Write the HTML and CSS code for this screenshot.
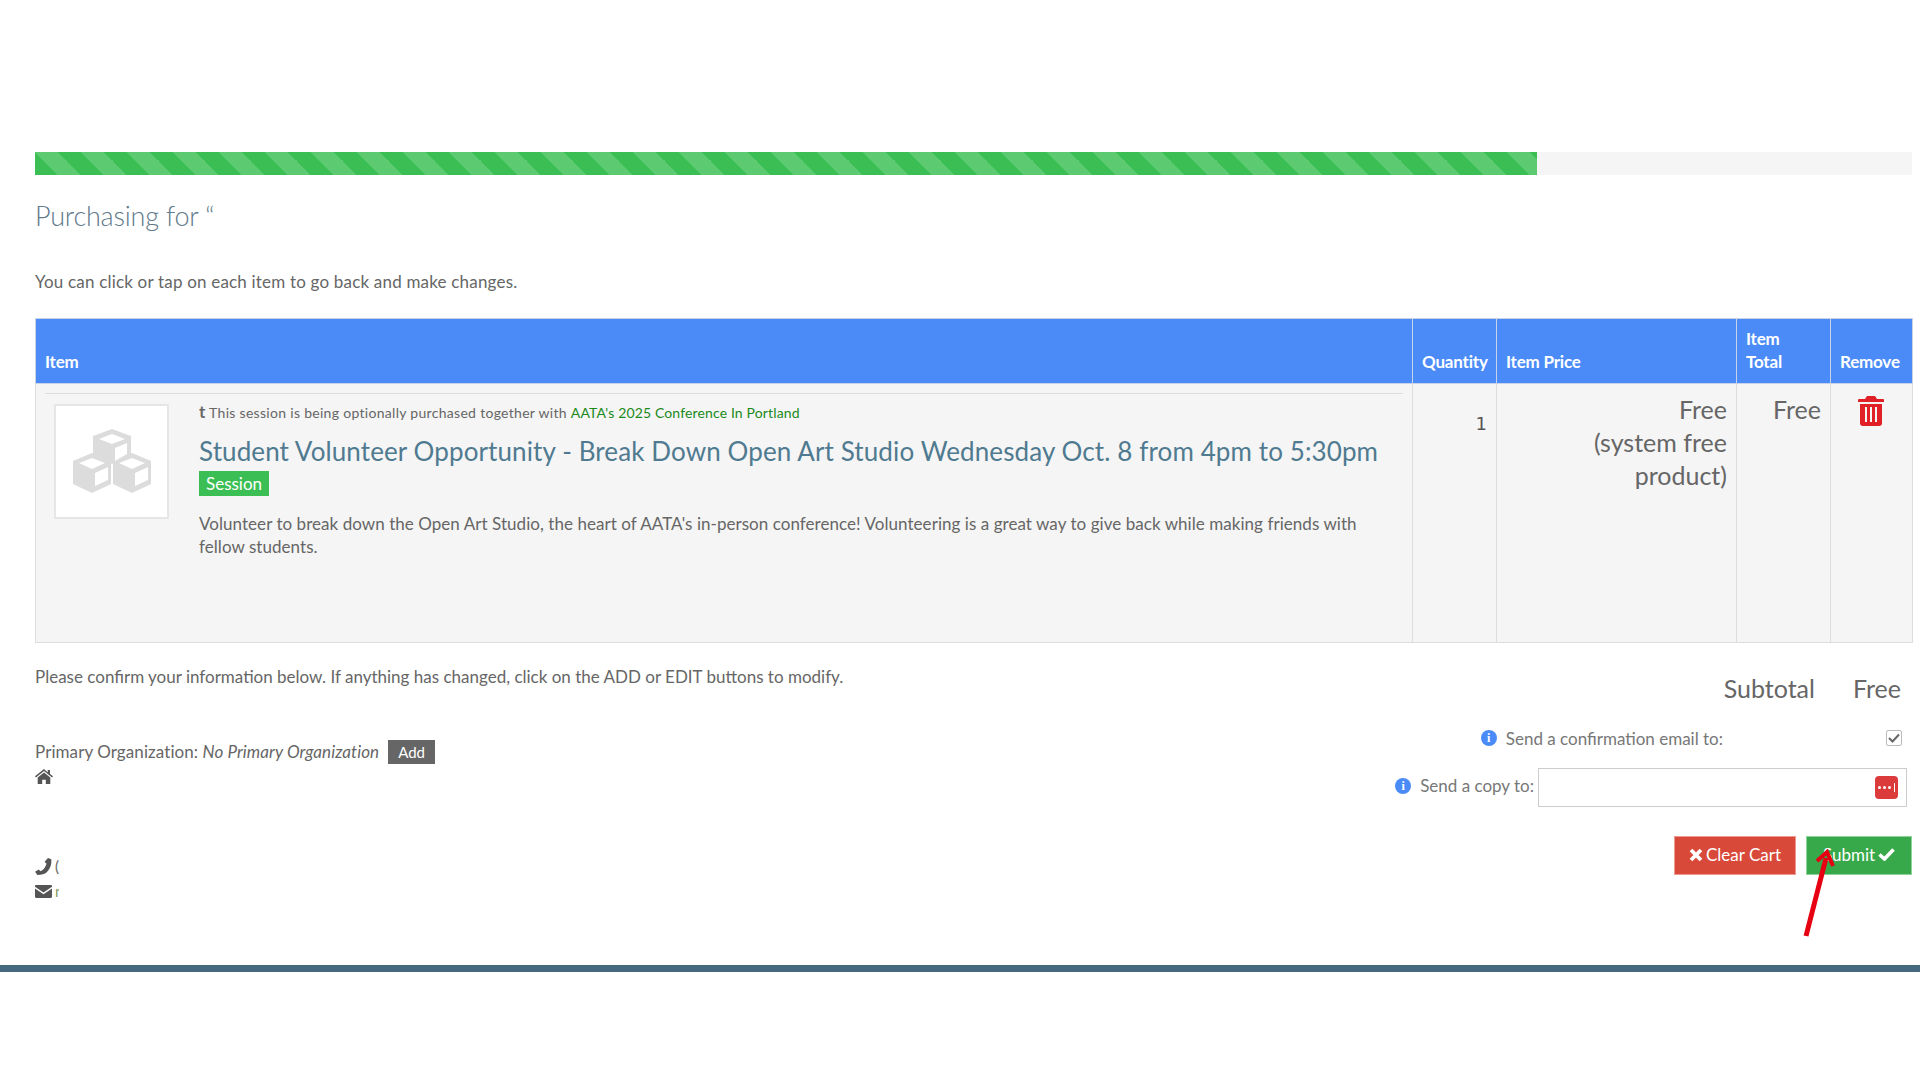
FILE: index.html
```html
<!DOCTYPE html>
<html lang="en">
<head>
<meta charset="utf-8">
<title>Purchasing</title>
<link rel="stylesheet" href="styles.css">
</head>
<body>
<main class="page">
  <div class="progress"><div class="progress-fill"></div></div>
  <h2 class="purchasing">Purchasing for “</h2>
  <p class="hint">You can click or tap on each item to go back and make changes.</p>
  <table class="cart">
    <colgroup>
      <col class="c-item"><col class="c-qty"><col class="c-price"><col class="c-total"><col class="c-remove">
    </colgroup>
    <thead>
      <tr><th>Item</th><th>Quantity</th><th>Item Price</th><th>Item<br>Total</th><th>Remove</th></tr>
    </thead>
    <tbody>
      <tr>
        <td class="item-cell">
          <div class="item-rule"></div>
          <div class="item">
            <div class="thumb">
              <svg width="80" height="66" viewBox="0 0 80 66">
                <g fill="#dcdcdc">
                  <path d="M40 0l19 7v20l-19 8-19-8V7z"/>
                  <path d="M20 24l19 8v23l-19 9L1 55V32z"/>
                  <path d="M60 24l19 8v23l-19 9-19-9V32z"/>
                </g>
                <g fill="#fff">
                  <path d="M40 5l13 5-13 5-13-5z"/>
                  <path d="M43 19l12-5v11l-12 7z"/>
                  <path d="M20 29l13 5-13 6-13-6z"/>
                  <path d="M23 44l13-6v13l-13 6z"/>
                  <path d="M60 29l13 5-13 6-13-6z"/>
                  <path d="M63 44l13-6v13l-13 6z"/>
                </g>
              </svg>
            </div>
            <div class="item-body">
              <p class="note"><span class="dagger">t</span> This session is being optionally purchased together with <a class="note-link">AATA's 2025 Conference In Portland</a></p>
              <h3 class="item-title">Student Volunteer Opportunity - Break Down Open Art Studio Wednesday Oct. 8 from 4pm to 5:30pm</h3>
              <span class="badge">Session</span>
              <p class="desc">Volunteer to break down the Open Art Studio, the heart of AATA's in-person conference! Volunteering is a great way to give back while making friends with fellow students.</p>
            </div>
          </div>
        </td>
        <td class="qty">1</td>
        <td class="money">Free<br>(system free product)</td>
        <td class="money">Free</td>
        <td class="remove">
          <svg width="26" height="30" viewBox="0 0 26 30" fill="#e01f26">
            <path d="M9 0h8l2 3h6a1 1 0 0 1 1 1v2H0V4a1 1 0 0 1 1-1h6z"/>
            <path fill-rule="evenodd" d="M2 8h22v19a3 3 0 0 1-3 3H5a3 3 0 0 1-3-3zM7 11v15h2V11zm5 0v15h2V11zm5 0v15h2V11z"/>
          </svg>
        </td>
      </tr>
    </tbody>
  </table>

  <div class="below">
    <section class="info">
      <p class="confirm">Please confirm your information below. If anything has changed, click on the ADD or EDIT buttons to modify.</p>
      <div class="org"><span>Primary Organization: <em>No Primary Organization</em></span><span class="add">Add</span></div>
      <div class="contact home">
        <svg width="18" height="15" viewBox="0 0 18 15" fill="#555"><path d="M9 0L0 7.300l.9 1.100L9 1.900l8.100 6.500.9-1.100-3-2.400V1h-2.300v2.400z"/><path d="M9 3.400L2.700 8.500V15h4.500v-4.200h3.600V15h4.500V8.500z"/></svg>
      </div>
      <div class="contact phone">
        <svg width="17" height="17" viewBox="0 0 17 17" fill="#555"><path d="M13 0l3.300 1.300c.5 5-1 9.500-4.300 12.700-2.500 2.300-5.500 3-9.500 3L0 13.800l3.700-2.300 1.800 1.700c3-1.500 5.200-4.200 6-7.500L9.600 3.800z"/></svg><span class="clip">(</span>
      </div>
      <div class="contact mail">
        <svg width="17" height="13" viewBox="0 0 17 13" fill="#555"><path d="M1.200 0h14.600c.7 0 1.200.5 1.200 1.200v.6L8.500 7.500 0 1.800v-.6C0 .5.500 0 1.200 0z"/><path d="M0 3.600l8.500 5.600L17 3.600v8.200c0 .7-.5 1.200-1.200 1.200H1.200C.5 13 0 12.500 0 11.800z"/></svg><span class="clip clip-green">n</span>
      </div>
    </section>
    <section class="summary">
      <div class="subtotal"><span>Subtotal</span><span>Free</span></div>
      <div class="send-row">
        <span class="i-dot">i</span><span class="send-label">Send a confirmation email to:</span>
        <span class="check"><svg width="12" height="10" viewBox="0 0 12 10" fill="none" stroke="#666" stroke-width="2"><path d="M1 5l3.500 3.500L11 1.500"/></svg></span>
      </div>
      <div class="copy-row">
        <span class="i-dot i-dot-copy">i</span><span class="copy-label">Send a copy to:</span>
        <div class="copy-input"><span class="pm"><i></i><i></i><i></i><b></b></span></div>
      </div>
      <div class="actions">
        <button class="btn btn-red"><svg width="14" height="14" viewBox="0 0 14 14" stroke="#fff" stroke-width="3.800" fill="none"><path d="M2 2l10 10m0-10L2 12"/></svg>Clear Cart</button>
        <button class="btn btn-green">Submit<svg width="17" height="13" viewBox="0 0 17 13" stroke="#fff" stroke-width="3.600" fill="none"><path d="M1.500 6.500l5 4.500 9-9.500"/></svg></button>
        <svg class="arrow" width="36" height="96" viewBox="0 0 36 96"><path d="M4 90L24 12" stroke="#e60012" stroke-width="5" fill="none"/><path d="M15 15l10-9 6 14" stroke="#e60012" stroke-width="4" fill="none"/></svg>
      </div>
    </section>
  </div>
</main>
<div class="footer-bar"></div>
</body>
</html>
```
FILE: styles.css
```css
* { box-sizing: border-box; }
html, body { margin: 0; padding: 0; }
body {
  background: #fff;
  color: #666;
  font-family: "Lato", "Liberation Sans", sans-serif;
  font-size: 17px;
  height: 1080px;
}
.page { padding: 152px 8px 0 35px; }
.progress { height: 23px; background: #f5f5f5; }
.progress-fill {
  height: 100%;
  width: 1502px;
  background-color: #3bbf55;
  background-image: linear-gradient(45deg, #5bca70 25%, transparent 25%, transparent 50%, #5bca70 50%, #5bca70 75%, transparent 75%);
  background-size: 46px 46px;
}
.purchasing {
  margin: 25px 0 0;
  font-size: 27px;
  font-weight: 300;
  line-height: 32px;
  color: #5f7a8a;
  letter-spacing: -0.2px;
}
.hint { margin: 38px 0 0; line-height: 24px; letter-spacing: 0.19px; }
.cart {
  margin-top: 24px;
  width: 1877px;
  table-layout: fixed;
  border-collapse: collapse;
  background: #f5f5f5;
}
.c-item { width: 1377px; }
.c-qty { width: 84px; }
.c-price { width: 240px; }
.c-total { width: 94px; }
.c-remove { width: 82px; }
.cart th {
  height: 65px;
  background: #4b8bf8;
  color: #fff;
  font-size: 17px;
  font-weight: 700;
  text-align: left;
  vertical-align: bottom;
  padding: 0 9px 10px;
  line-height: 23px;
  letter-spacing: -0.2px;
  border: 1px solid #c8d4e6;
  white-space: nowrap;
}
.cart td { height: 259px; border: 1px solid #ddd; vertical-align: top; }
.item-cell { padding: 9px 9px 0; }
.item-rule { border-top: 1px solid #ddd; }
.item { display: flex; gap: 30px; padding: 10px 0 0 9px; }
.thumb {
  flex: none;
  width: 115px;
  height: 115px;
  background: #fff;
  border: 2px solid #e6e6e6;
  display: flex;
  align-items: center;
  justify-content: center;
}
.item-body { flex: 1; min-width: 0; }
.note { margin: -2px 0 0; font-size: 14px; line-height: 20px; letter-spacing: 0.3px; }
.dagger { font-weight: 700; font-size: 17px; }
.note-link { color: #1a8a1a; letter-spacing: 0.14px; }
.item-title {
  margin: 11px 0 0;
  font-size: 26px;
  font-weight: 400;
  line-height: 34px;
  color: #4f7a90;
  letter-spacing: 0.11px;
  white-space: nowrap;
}
.badge {
  display: inline-block;
  margin-top: 3px;
  background: #3bbf55;
  color: #fff;
  font-size: 17px;
  line-height: 25px;
  height: 25px;
  padding: 0 7px;
}
.desc { margin: 16px 0 0; line-height: 23px; letter-spacing: 0.05px; }
.qty { text-align: right; padding: 29px 9px 0; font-size: 18px; color: #555; font-family: "DejaVu Sans", sans-serif; }
.money { text-align: right; padding: 9px 9px 0; font-size: 25px; line-height: 33px; color: #666; }
.remove { text-align: center; padding-top: 12px; padding-right: 2px; }
.below { display: flex; justify-content: space-between; }
.info { padding-top: 22px; }
.confirm { margin: 0; line-height: 24px; }
.org { margin-top: 51px; display: flex; align-items: center; gap: 9px; line-height: 24px; letter-spacing: 0.08px; }
.add {
  background: #666;
  color: #fff;
  font-size: 15px;
  height: 24px;
  line-height: 24px;
  padding: 0 10px;
  letter-spacing: 0;
}
.contact { display: flex; align-items: center; gap: 3px; height: 25px; }
.home { margin-top: 0; }
.phone { margin-top: 65px; }
.clip { display: inline-block; width: 4px; overflow: hidden; font-size: 15px; line-height: 17px; }
.clip-green { color: #8a9a60; }
.summary { width: 560px; display: flex; flex-direction: column; align-items: flex-end; padding-top: 29px; }
.subtotal { display: flex; gap: 38px; padding-right: 11px; font-size: 25px; line-height: 32px; color: #666; }
.send-row { display: flex; align-items: center; margin-top: 22px; height: 24px; padding-right: 10px; color: #777; }
.i-dot {
  flex: none;
  width: 16px;
  height: 16px;
  border-radius: 50%;
  background: #4b8bf8;
  color: #fff;
  font: 700 12px/16px "Liberation Serif", serif;
  text-align: center;
  margin-right: 9px;
}
.i-dot-copy { margin-bottom: 4px; }
.send-label { margin-right: 163px; }
.check {
  width: 16px;
  height: 16px;
  border: 1px solid #bbb;
  border-radius: 2px;
  display: flex;
  align-items: center;
  justify-content: center;
}
.copy-row { display: flex; align-items: center; margin-top: 18px; padding-right: 5px; color: #777; }
.copy-label { margin-right: 4px; margin-bottom: 4px; }
.copy-input {
  width: 369px;
  height: 39px;
  border: 1px solid #ccc;
  display: flex;
  align-items: center;
  justify-content: flex-end;
  padding-right: 8px;
  background: #fff;
}
.pm {
  width: 23px;
  height: 23px;
  border-radius: 4px;
  background: #dc3b3b;
  display: flex;
  align-items: center;
  justify-content: center;
  gap: 2px;
}
.pm i { width: 3px; height: 3px; border-radius: 50%; background: #fff; }
.pm b { width: 1px; height: 9px; background: #fff; margin-left: 1px; }
.actions { position: relative; display: flex; gap: 10px; margin-top: 29px; }
.btn {
  height: 39px;
  border: 1px solid transparent;
  color: #fff;
  font: 400 17px "Lato", sans-serif;
  display: flex;
  align-items: center;
  justify-content: center;
  gap: 3px;
  padding: 0 0 2px;
}
.btn-red { width: 122px; background: #d9493a; border-color: #ee9a90; }
.btn-green { width: 106px; background: #38a94a; border-color: #8fd39a; }
.arrow { position: absolute; left: 128px; top: 10px; }
.footer-bar { position: absolute; left: 0; right: 0; top: 965px; height: 7px; background: #456a80; }
```
